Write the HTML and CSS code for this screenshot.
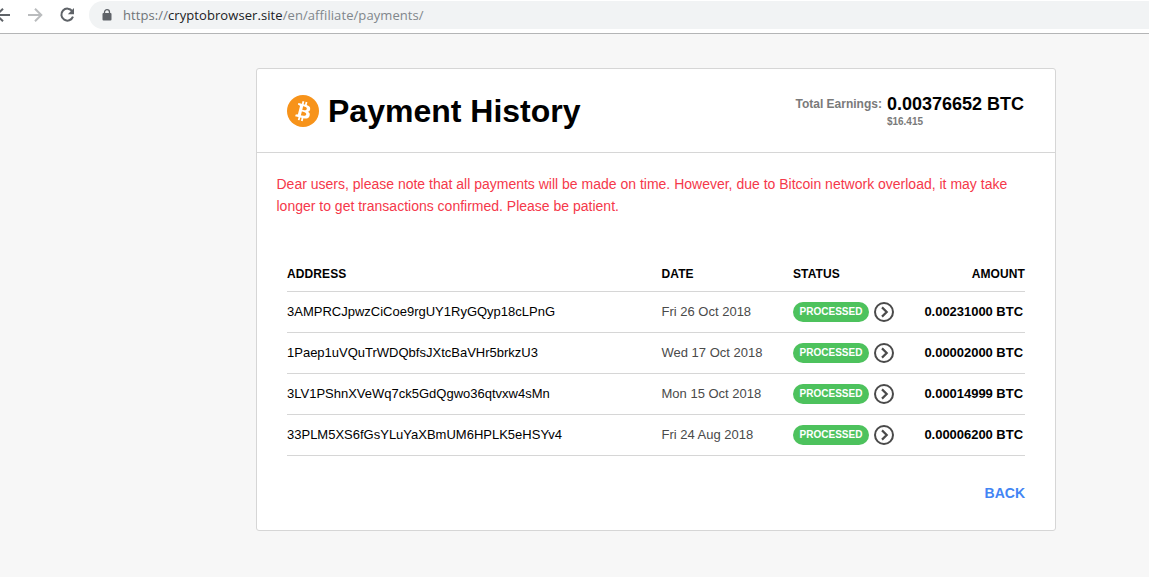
FILE: index.html
```html
<!DOCTYPE html>
<html lang="en">
  <head>
    <meta charset="UTF-8" />
    <meta name="viewport" content="width=device-width, initial-scale=1.0" />
    <title>Payment History</title>
    <link rel="stylesheet" href="styles.css">
  </head>
  <body>
    <svg class="symbols" width="0" height="0">
      <symbol id="arrow" viewBox="0 0 20 20">
        <circle cx="10" cy="10" r="9" fill="none" stroke="#4a4a4a" stroke-width="2" />
        <path d="M8 5.4 12.7 10 8 14.6" fill="none" stroke="#4a4a4a" stroke-width="2.2" />
      </symbol>
    </svg>

    <div class="toolbar">
      <svg class="nav-icons" width="80" height="30" viewBox="0 0 80 30" fill="none" stroke-width="2">
        <path d="M10 15H-3M3 8.7-3.3 15 3 21.3" stroke="#5f6368" />
        <path d="M28 15h13M35 8.7l6.3 6.3-6.3 6.3" stroke="#babcbe" />
        <path d="M72.3 11.2A6 6 0 1 0 73 16.7" stroke="#5f6368" />
        <path d="M74 8v6.2h-6.2z" fill="#5f6368" />
      </svg>
      <div class="address-bar">
        <svg class="lock" width="10" height="12" viewBox="0 0 10 12">
          <path d="M2.5 5V3.2a2.5 2.5 0 0 1 5 0V5" fill="none" stroke="#5f6368" stroke-width="1.3" />
          <rect x="0.5" y="4" width="9" height="7.5" rx="1" fill="#5f6368" />
        </svg>
        <span class="url"><span class="scheme">https://</span><span class="host">cryptobrowser.site</span><span class="path">/en/affiliate/payments/</span></span>
      </div>
    </div>

    <div class="card">
      <div class="card-header">
        <svg class="coin" width="32" height="32" viewBox="0 0 32 32">
          <circle cx="16" cy="16" r="16" fill="#f7931a" />
          <path fill="#fff" d="M23.19 14.02c.31-2.1-1.29-3.23-3.48-3.98l.71-2.85-1.73-.43-.69 2.77c-.46-.11-.92-.22-1.39-.33l.7-2.79-1.74-.43-.71 2.84c-.38-.09-.75-.17-1.1-.26l-2.4-.6-.46 1.86s1.29.3 1.26.31c.7.18.83.64.81 1.01l-1.98 7.92c-.09.21-.31.54-.81.42.02.02-1.26-.32-1.26-.32l-.87 2 2.26.56c.42.11.83.22 1.24.32l-.72 2.88 1.73.43.71-2.85c.48.13.94.25 1.39.36l-.71 2.83 1.74.44.72-2.88c2.96.56 5.18.33 6.12-2.34.75-2.15-.04-3.39-1.59-4.2 1.13-.26 1.98-1 2.21-2.54l.04-.15zm-3.96 5.54c-.54 2.15-4.16.99-5.34.7l.95-3.82c1.17.29 4.94.87 4.39 3.12zm.54-5.57c-.49 1.96-3.51.96-4.48.72l.86-3.47c.98.25 4.13.7 3.62 2.75z" />
        </svg>
        <h1>Payment History</h1>
        <div class="earnings">
          <span class="earnings-label">Total Earnings:</span>
          <div>
            <div class="earnings-btc">0.00376652 BTC</div>
            <div class="earnings-usd">$16.415</div>
          </div>
        </div>
      </div>

      <p class="notice">Dear users, please note that all payments will be made on time. However, due to Bitcoin network overload, it may take longer to get transactions confirmed. Please be patient.</p>

      <table>
        <thead>
          <tr>
            <th class="col-address">Address</th>
            <th class="col-date">Date</th>
            <th class="col-status">Status</th>
            <th class="col-amount">Amount</th>
          </tr>
        </thead>
        <tbody>
          <tr>
            <td class="address">3AMPRCJpwzCiCoe9rgUY1RyGQyp18cLPnG</td>
            <td class="date">Fri 26 Oct 2018</td>
            <td><div class="status"><span class="badge">Processed</span><svg class="arrow"><use href="#arrow" /></svg></div></td>
            <td class="amount">0.00231000 BTC</td>
          </tr>
          <tr>
            <td class="address">1Paep1uVQuTrWDQbfsJXtcBaVHr5brkzU3</td>
            <td class="date">Wed 17 Oct 2018</td>
            <td><div class="status"><span class="badge">Processed</span><svg class="arrow"><use href="#arrow" /></svg></div></td>
            <td class="amount">0.00002000 BTC</td>
          </tr>
          <tr>
            <td class="address">3LV1PShnXVeWq7ck5GdQgwo36qtvxw4sMn</td>
            <td class="date">Mon 15 Oct 2018</td>
            <td><div class="status"><span class="badge">Processed</span><svg class="arrow"><use href="#arrow" /></svg></div></td>
            <td class="amount">0.00014999 BTC</td>
          </tr>
          <tr>
            <td class="address">33PLM5XS6fGsYLuYaXBmUM6HPLK5eHSYv4</td>
            <td class="date">Fri 24 Aug 2018</td>
            <td><div class="status"><span class="badge">Processed</span><svg class="arrow"><use href="#arrow" /></svg></div></td>
            <td class="amount">0.00006200 BTC</td>
          </tr>
        </tbody>
      </table>

      <div class="card-footer">
        <a href="#" class="back">Back</a>
      </div>
    </div>
  </body>
</html>
```
FILE: styles.css
```css
* {
  margin: 0;
  padding: 0;
  box-sizing: border-box;
}
body {
  background: #f7f7f7;
  font-family: "Liberation Sans", Arial, sans-serif;
  color: #000;
  height: 577px;
  overflow: hidden;
}
.symbols {
  display: none;
}

/* browser bar */
.toolbar {
  display: flex;
  height: 34px;
  padding-top: 1px;
  background: #fff;
  border-bottom: 1px solid #b4b5b6;
}
.nav-icons {
  flex: none;
  margin-top: -1px;
}
.address-bar {
  flex: 1;
  display: flex;
  align-items: center;
  height: 28px;
  margin-left: 9px;
  padding-left: 13px;
  background: #f1f3f4;
  border-radius: 14px 0 0 14px;
}
.url {
  margin-left: 11px;
  font-family: "Open Sans", sans-serif;
  font-size: 13px;
  letter-spacing: 0.08px;
  white-space: nowrap;
}
.scheme {
  color: #6f7377;
}
.host {
  color: #202124;
}
.path {
  color: #80868b;
}

/* card */
.card {
  width: 800px;
  height: 463px;
  margin: 34px 0 0 256px;
  background: #fff;
  border: 1px solid #d6d6d6;
  border-radius: 3px;
}
.card-header {
  display: flex;
  height: 84px;
  padding: 26px 31px 0 30px;
  border-bottom: 1px solid #d6d6d6;
}
h1 {
  margin-left: 9px;
  font-size: 32px;
  line-height: 32px;
}
.earnings {
  display: flex;
  margin-left: auto;
}
.earnings-label {
  margin-right: 5px;
  font-size: 12px;
  font-weight: bold;
  line-height: 18px;
  color: #7a7a7a;
}
.earnings-btc {
  font-size: 18px;
  font-weight: bold;
  line-height: 18px;
}
.earnings-usd {
  font-size: 10px;
  font-weight: bold;
  line-height: 18px;
  color: #7a7a7a;
}
.notice {
  padding: 20px 40px 0 19.5px;
  font-size: 14px;
  line-height: 22px;
  color: #f5384a;
}
table {
  width: 738px;
  margin: 37px 0 0 30px;
  border-collapse: collapse;
  table-layout: fixed;
}
th {
  height: 37px;
  padding-top: 3px;
  font-size: 12px;
  letter-spacing: 0.1px;
  text-align: left;
  text-transform: uppercase;
  border-bottom: 1px solid #d6d6d6;
}
.col-address {
  width: 374.5px;
}
.col-date {
  width: 131.5px;
}
.col-status {
  width: 110px;
}
.col-amount {
  text-align: right;
}
td {
  height: 41px;
  font-size: 13px;
  border-bottom: 1px solid #d6d6d6;
}
.address,
.date,
.amount {
  padding-bottom: 1px;
}
.date {
  color: #4a4a4a;
}
.amount {
  padding-right: 2px;
  font-weight: bold;
  letter-spacing: -0.03px;
  text-align: right;
}
.status {
  display: flex;
  align-items: center;
}
.badge {
  width: 76px;
  height: 20px;
  border-radius: 10px;
  background: #4dc25d;
  color: #fff;
  font-size: 10px;
  font-weight: bold;
  line-height: 20px;
  text-align: center;
  text-transform: uppercase;
}
.arrow {
  width: 20px;
  height: 20px;
  margin-left: 5px;
}
.card-footer {
  padding: 28px 30px 0;
  text-align: right;
}
.back {
  color: #4285f4;
  font-size: 14px;
  font-weight: bold;
  text-decoration: none;
  text-transform: uppercase;
}
```
